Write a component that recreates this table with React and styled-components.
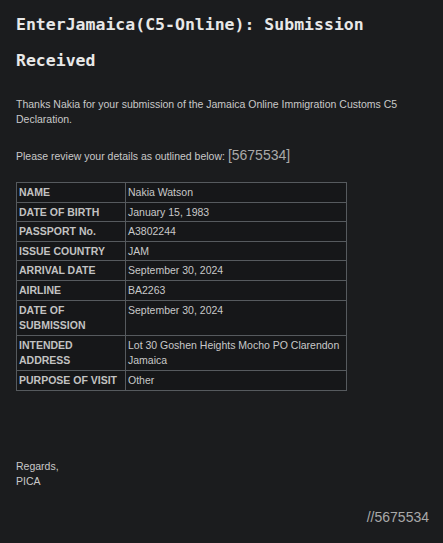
import React from 'react';
import styled, { createGlobalStyle } from 'styled-components';

const GlobalStyle = createGlobalStyle`
	html, body {
		margin: 0;
		padding: 0;
		background-color: #1b1c1e;
	}
`;

const Page = styled.div`
	min-height: 543px;
	box-sizing: border-box;
	padding: 7px 14px 0 16px;
	background-color: #1b1c1e;
	color: #c9c9c9;
	font-family: 'Liberation Sans', Arial, sans-serif;
	font-size: 10.5px;
	line-height: 15px;
`;

const Title = styled.h1`
	margin: 0 0 18px 0;
	font-family: 'DejaVu Sans Mono', 'Liberation Mono', monospace;
	font-size: 16.5px;
	font-weight: bold;
	line-height: 36px;
	color: #e8e8e8;
	max-width: 400px;
`;

const Para = styled.p`
	margin: 0 0 21px 0;
`;

const Ref = styled.span`
	font-size: 14px;
	color: #a9a9a9;
`;

const Table = styled.table`
	border-collapse: collapse;
	width: 331px;
	margin-top: -3px;
	background-color: #161719;
	table-layout: fixed;
`;

const Head = styled.th`
	width: 104px;
	border: 1px solid #565a5e;
	padding: 2px 2px 1px 2px;
	text-align: left;
	vertical-align: top;
	font-weight: bold;
	color: #c2c2c2;
	line-height: 15.6px;
`;

const Cell = styled.td`
	border: 1px solid #565a5e;
	padding: 2px 2px 1px 2px;
	vertical-align: top;
	color: #c9c9c9;
	line-height: 15.6px;
`;

const Regards = styled.p`
	margin: 68px 0 0 0;
`;

const Footer = styled.div`
	text-align: right;
	margin-top: 21px;
	font-size: 14px;
	color: #a9a9a9;
`;

const rows = [
	['NAME', 'Nakia Watson'],
	['DATE OF BIRTH', 'January 15, 1983'],
	['PASSPORT No.', 'A3802244'],
	['ISSUE COUNTRY', 'JAM'],
	['ARRIVAL DATE', 'September 30, 2024'],
	['AIRLINE', 'BA2263'],
	['DATE OF SUBMISSION', 'September 30, 2024'],
	['INTENDED ADDRESS', 'Lot 30 Goshen Heights Mocho PO Clarendon Jamaica'],
	['PURPOSE OF VISIT', 'Other'],
];

const App = () => {
	return (
		<Page>
			<GlobalStyle />
			<Title>EnterJamaica(C5-Online): Submission Received</Title>
			<Para>
				Thanks Nakia for your submission of the Jamaica Online Immigration Customs C5 Declaration.
			</Para>
			<Para>
				Please review your details as outlined below: <Ref>[5675534]</Ref>
			</Para>
			<Table>
				<tbody>
					{rows.map(([label, value]) => (
						<tr key={label}>
							<Head>{label}</Head>
							<Cell>{value}</Cell>
						</tr>
					))}
				</tbody>
			</Table>
			<Regards>
				Regards,
				<br />
				PICA
			</Regards>
			<Footer>//5675534</Footer>
		</Page>
	);
};

export default App;
